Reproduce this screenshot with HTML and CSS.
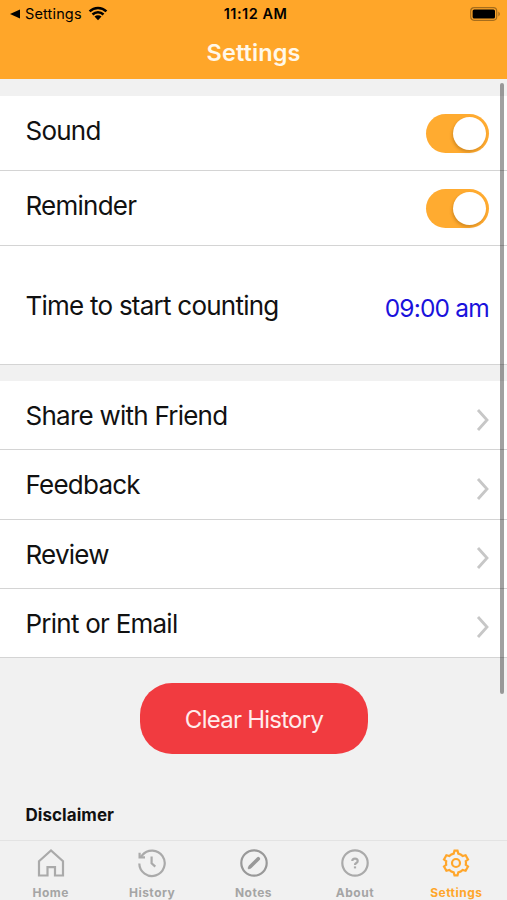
FILE: index.html
```
<!DOCTYPE html>
<html lang="en">
<head>
    <meta charset="UTF-8">
    <meta name="viewport" content="width=device-width, initial-scale=1.0">
    <title>Settings</title>
    <link rel="stylesheet" href="styles.css">
</head>
<body>
    <div id="header">
        <div class="status">
            <div class="status_left">
                <svg width="10" height="10" viewBox="0 0 10 10"><path d="M0 5L10 0.6V9.4Z"/></svg>
                <span class="back">Settings</span>
                <svg class="wifi" width="20" height="15" viewBox="0 0 20 15">
                    <path d="M1.6 5.4a12 12 0 0 1 16.8 0M4.5 8.5a8 8 0 0 1 11 0" fill="none" stroke="#000" stroke-width="2.5"/>
                    <path d="M6.5 10.6a5 5 0 0 1 7 0L10 14.2z"/>
                </svg>
            </div>
            <span class="clock">11:12 AM</span>
            <svg class="battery" width="31" height="14" viewBox="0 0 31 14">
                <rect x="0.7" y="0.7" width="26" height="12.6" rx="3.5" fill="none" stroke="#a66d1c" stroke-width="1.2"/>
                <rect x="2.6" y="2.5" width="22.4" height="9" rx="1.6"/>
                <path d="M28.4 4.6q3 2.4 0 4.8z" fill="#a66d1c"/>
            </svg>
        </div>
        <h1>Settings</h1>
    </div>

    <div id="content">
        <div class="group">
            <div class="row switch_row">
                <span class="label">Sound</span>
                <div class="switch"><div class="knob"></div></div>
            </div>
            <div class="row switch_row">
                <span class="label">Reminder</span>
                <div class="switch"><div class="knob"></div></div>
            </div>
            <div class="row time_row">
                <span class="label">Time to start counting</span>
                <span class="time">09:00 am</span>
            </div>
        </div>

        <div class="group links">
            <div class="row">
                <span class="label">Share with Friend</span>
                <svg class="arrow" width="14" height="24" viewBox="0 0 14 24"><path d="M2 2l9 10l-9 10"/></svg>
            </div>
            <div class="row">
                <span class="label">Feedback</span>
                <svg class="arrow" width="14" height="24" viewBox="0 0 14 24"><path d="M2 2l9 10l-9 10"/></svg>
            </div>
            <div class="row">
                <span class="label">Review</span>
                <svg class="arrow" width="14" height="24" viewBox="0 0 14 24"><path d="M2 2l9 10l-9 10"/></svg>
            </div>
            <div class="row">
                <span class="label">Print or Email</span>
                <svg class="arrow" width="14" height="24" viewBox="0 0 14 24"><path d="M2 2l9 10l-9 10"/></svg>
            </div>
        </div>

        <button type="button" class="clear">Clear History</button>
        <h2>Disclaimer</h2>
        <div class="scrollbar"></div>
    </div>

    <div id="tabs">
        <div class="tab">
            <svg width="30" height="30" viewBox="0 0 30 30"><path d="M3 13.2L15 2.4L27 13.2V27.5H19V19.2H11.5V27.5H3Z"/></svg>
            <span>Home</span>
        </div>
        <div class="tab">
            <svg width="30" height="30" viewBox="0 0 30 30">
                <path d="M2.3 15.5A12.7 12.7 0 1 0 5.2 7.2L3.4 9.2"/>
                <path d="M2.6 4.8V9.4H8"/>
                <path d="M14.6 8.5V15.2L18.3 18.6"/>
            </svg>
            <span>History</span>
        </div>
        <div class="tab">
            <svg class="dark" width="30" height="30" viewBox="0 0 30 30">
                <circle cx="15" cy="15" r="12.7"/>
                <path d="M11.2 18.8L19.3 10.7" stroke-width="3.6" stroke-linecap="round"/>
                <path d="M9.2 20.8L11 19" stroke-width="2"/>
            </svg>
            <span>Notes</span>
        </div>
        <div class="tab">
            <svg width="30" height="30" viewBox="0 0 30 30">
                <circle cx="15" cy="15" r="12.7"/>
                <path d="M12.3 13Q12.3 10.6 15 10.6T17.7 13Q17.7 14.2 16.3 15T15 17"/>
                <path d="M15 18.4V20.4"/>
            </svg>
            <span>About</span>
        </div>
        <div class="tab active">
            <svg width="30" height="30" viewBox="0 0 30 30">
                <path d="M12.7 5.6L13.5 2.6H16.5L17.3 5.6Q20 6.3 21.6 8L24.6 7.2L27 11.5L24.8 13.2Q25.2 15 24.8 16.8L27 18.5L24.6 22.8L21.6 22Q20 23.7 17.3 24.4L16.5 27.4H13.5L12.7 24.4Q10 23.7 8.4 22L5.4 22.8L3 18.5L5.2 16.8Q4.8 15 5.2 13.2L3 11.5L5.4 7.2L8.4 8Q10 6.3 12.7 5.6Z"/>
                <circle cx="15" cy="15" r="4"/>
            </svg>
            <span>Settings</span>
        </div>
    </div>
</body>
</html>
```
FILE: styles.css
```
* {
    box-sizing: border-box;
    font-family: Inter, "Liberation Sans", sans-serif;
}

body{
    margin: 0;
    height: 900px;
    display: flex;
    flex-direction: column;
    overflow: hidden;
    background: #f1f1f1;
    color: #111;
}

#header{
    height: 79px;
    background: #ffa629;
}

.status{
    display: grid;
    grid-template-columns: 1fr auto 1fr;
    align-items: center;
    height: 27px;
    padding: 0 6px 0 10px;
    color: #000;
}

.status_left{
    display: flex;
    align-items: center;
}

.back{
    margin: 1px 6px 0 5px;
    font-size: 14.5px;
    line-height: 18px;
    letter-spacing: 0.15px;
}

.wifi{
    margin-top: -1px;
}

.clock{
    margin: 1px 0 0;
    font-size: 14.5px;
    line-height: 18px;
    font-weight: 600;
    letter-spacing: 0.5px;
}

.battery{
    justify-self: end;
}

h1{
    margin: 9px 0 0;
    text-align: center;
    font-size: 23.5px;
    line-height: 34px;
    font-weight: 600;
    letter-spacing: 0.1px;
    color: #fff8ea;
}

#content{
    position: relative;
    flex: 1;
    padding-top: 17px;
}

.group{
    background: #fff;
}

.links{
    margin-top: 16px;
}

.row{
    display: flex;
    justify-content: space-between;
    align-items: center;
    height: 69.25px;
    padding: 0 18px 0 25.5px;
    border-bottom: 1.5px solid #d4d4d4;
}

.switch_row{
    height: 75px;
}

.time_row{
    height: 119px;
}

.label{
    padding-top: 2px;
    font-size: 26px;
    line-height: 32px;
    letter-spacing: -0.76px;
}

.switch_row .label{
    padding: 0 0 4px;
}

.switch{
    width: 63px;
    height: 39px;
    padding: 3px;
    border-radius: 20px;
    background: #ffab30;
}

.knob{
    width: 33px;
    height: 33px;
    margin-left: auto;
    border-radius: 50%;
    background: #fff;
    box-shadow: -1px 2px 3px rgba(120, 70, 0, 0.3);
}

.time{
    padding-top: 5px;
    font-size: 24.5px;
    letter-spacing: -0.8px;
    color: #1a12dc;
}

.arrow{
    margin: 9px -1px 0 0;
    fill: none;
    stroke: #c7c7c7;
    stroke-width: 2.8;
}

.clear{
    display: block;
    width: 228px;
    height: 71px;
    margin: 24.5px 0 0 140px;
    padding: 2px 0 0;
    border: 0;
    border-radius: 32px;
    background: #f13b40;
    color: #ffecec;
    font-size: 24px;
    letter-spacing: -0.75px;
}

h2{
    margin: 49.5px 0 0 25.5px;
    font-size: 17px;
    line-height: 24px;
    font-weight: 700;
    letter-spacing: 0.05px;
}

.scrollbar{
    position: absolute;
    top: 4px;
    right: 3px;
    width: 4px;
    height: 611px;
    border-radius: 2px;
    background: rgba(0, 0, 0, 0.37);
}

#tabs{
    display: flex;
    height: 60px;
    border-top: 1px solid #e3e3e3;
}

.tab{
    flex: 1;
    display: flex;
    flex-direction: column;
    align-items: center;
    padding-top: 7px;
    color: #a5a5a5;
    font-size: 12px;
    line-height: 14px;
    font-weight: 700;
    letter-spacing: 0.5px;
}

.tab svg{
    margin-bottom: 8px;
    fill: none;
    stroke: #aaa;
    stroke-width: 2.2;
}

.tab .dark{
    stroke: #999;
}

.active{
    color: #ffa62b;
}

.tab.active svg{
    stroke: #ffa62b;
}
```
